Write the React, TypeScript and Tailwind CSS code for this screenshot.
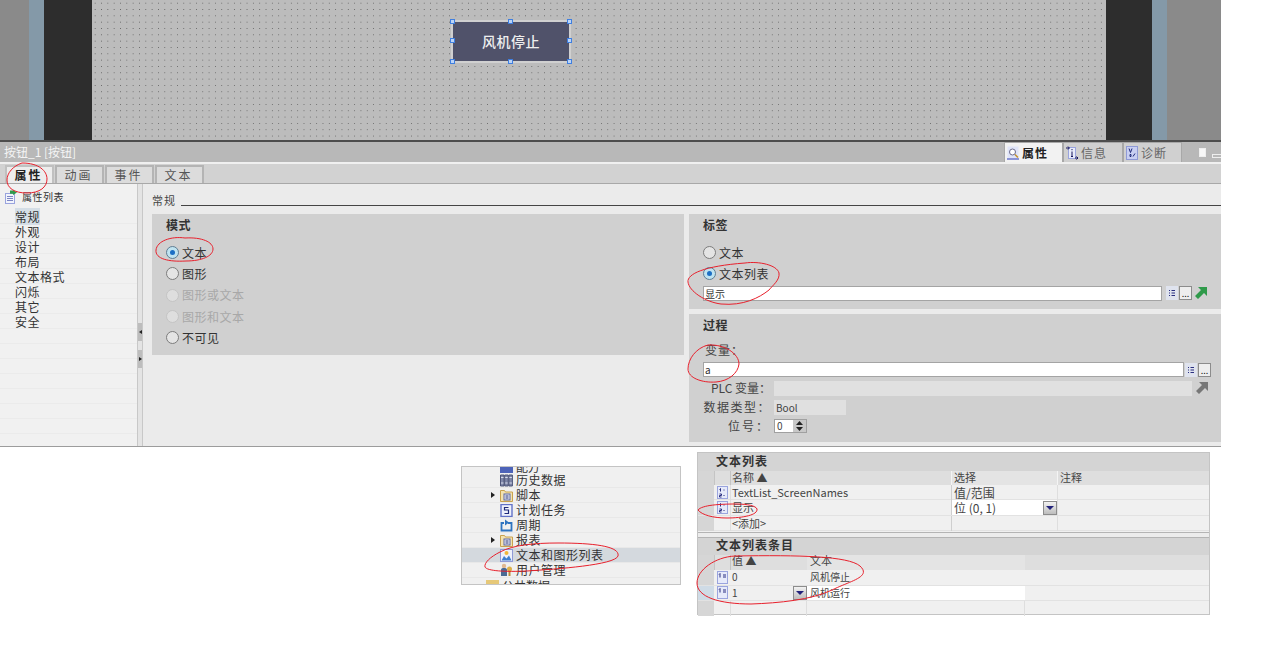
import React from 'react';

const font = "font-['Noto_Sans_CJK_SC','Liberation_Sans',sans-serif]";

const ListIcon = () => (
  <svg width="11" height="13" viewBox="0 0 11 13">
    <rect x="0.5" y="0.5" width="10" height="12" fill="#e6eafa" stroke="#9aa4de" />
    <path d="M3.5 2.5v3M2.5 3.5l1-1M2.5 8h2v1.5h-2v1.5h2M6.5 4h1M6.5 9.5h1" stroke="#2a2f80" fill="none" />
  </svg>
);

const EntryIcon = () => (
  <svg width="11" height="13" viewBox="0 0 11 13">
    <rect x="0.5" y="0.5" width="10" height="12" fill="#e6eafa" stroke="#9aa4de" />
    <path d="M3 2.5v4M2 3.5l1-1M6 4h3M6 6h3" stroke="#2a2f80" fill="none" />
  </svg>
);

const PropsListIcon = () => (
  <svg width="12" height="14" viewBox="0 0 12 14">
    <rect x="0.5" y="3.5" width="9" height="10" fill="#f2f4fc" stroke="#9aa4de" />
    <path d="M2 6.5h6M2 8.5h6M2 10.5h6" stroke="#7c86c4" />
    <path d="M5 0.5h3V0l4 2.5L8 5V3.8H5z" fill="#2f9a4a" />
  </svg>
);

const DropArrow = () => (
  <span className="flex h-[14px] w-[14px] items-center justify-center border border-[#8c8c8c] bg-[linear-gradient(#f2f2f2,#bdbdbd)]">
    <svg width="8" height="4" viewBox="0 0 8 4"><path d="M0 0h8L4 4z" fill="#22227a" /></svg>
  </span>
);

const Radio = ({ checked, disabled }: { checked?: boolean; disabled?: boolean }) => (
  <span
    className={`flex h-[13px] w-[13px] items-center justify-center rounded-full border ${
      disabled ? 'border-[#c4c4c4] bg-[#dedede]' : checked ? 'border-[#5f7d92] bg-[#bfe3f0]' : 'border-[#7c7c7c] bg-[#e4e4e4]'
    }`}
  >
    {checked && <span className="h-[5px] w-[5px] rounded-full bg-[#1c6fc4]" />}
  </span>
);

const RadioRow = ({ label, checked, disabled }: { label: string; checked?: boolean; disabled?: boolean }) => (
  <div className={`flex h-[21.3px] items-center gap-[3px] text-[12px] tracking-[0.5px] ${disabled ? 'text-[#a8a8a8]' : 'text-[#333]'}`}>
    <Radio checked={checked} disabled={disabled} />
    <span>{label}</span>
  </div>
);

const PickerButtons = () => (
  <div className="ml-[1px] flex items-center gap-[1px]">
    <span className="flex h-[14px] w-[12px] items-center justify-center bg-[#dfe3ee]">
      <svg width="8" height="8" viewBox="0 0 8 8"><path d="M1 1h1v1H1zM1 3.5h1v1H1zM1 6h1v1H1zM3.5 1H7v1H3.5zM3.5 3.5H7v1H3.5zM3.5 6H7v1H3.5z" fill="#2a2f80" /></svg>
    </span>
    <span className="flex h-[14px] w-[13px] items-end justify-center border border-[#8c8c8c] bg-[#eeeeee] text-[9px] leading-[10px] text-[#222]">...</span>
  </div>
);

const GoArrow = ({ color }: { color: string }) => (
  <svg width="12" height="12" viewBox="0 0 12 12" className="ml-[3px]">
    <path d="M3 0h9v9L9 6 3 12 0 9l6-6z" fill={color} />
  </svg>
);

const Handle = ({ className }: { className: string }) => (
  <span className={`absolute h-[5px] w-[5px] border border-[#3f7fe0] bg-[#bcd4f7] ${className}`} />
);

const TabButton = ({ label, active }: { label: string; active?: boolean }) => (
  <div
    className={`flex h-[18px] w-[49px] items-center justify-center border-2 border-b-0 border-[#b4b4b4] pr-[2px] text-[12px] tracking-[2px] ${
      active ? 'border-[#c0c0c0] bg-[#ededed] font-bold text-[#222]' : 'bg-[#dcdcdc] text-[#555]'
    }`}
  >
    {label}
  </div>
);

const PropsTabIcon = () => (
  <svg width="12" height="14" viewBox="0 0 12 14">
    <rect x="0.5" y="0.5" width="11" height="12" fill="#dfe4f8" />
    <path d="M0 13h12" stroke="#6a76cc" strokeWidth="1.5" />
    <circle cx="5.5" cy="6" r="3" fill="#fff" stroke="#6c6c8c" />
    <path d="M8 8.5l3 3" stroke="#c4902c" strokeWidth="1.5" />
  </svg>
);

const InfoTabIcon = () => (
  <svg width="12" height="14" viewBox="0 0 12 14">
    <rect x="2.5" y="1.5" width="7" height="11" fill="#e8ecfa" stroke="#9aa4de" />
    <path d="M0 2h3M2 .5L3.5 2 2 3.5M9 12h3M10.5 10.5L12 12l-1.5 1.5" stroke="#14145c" fill="none" />
    <path d="M6 5.5v4.5M5 10.5h2M6 3v1.2" stroke="#14145c" />
  </svg>
);

const DiagTabIcon = () => (
  <svg width="12" height="14" viewBox="0 0 12 14">
    <rect x="0.5" y="0.5" width="11" height="13" fill="#c8cff2" stroke="#8f9ad6" />
    <path d="M3 2.5l1.5 4 1.5-4M7 10.5l2-3M4 8.5h1v2H4z" stroke="#1f2a7a" fill="none" />
  </svg>
);

const InspectorTab = ({ label, active, icon, className }: { label: string; active?: boolean; icon: React.ReactNode; className: string }) => (
  <div
    className={`flex h-[20px] items-center gap-[3px] border border-b-0 border-[#a8a8a8] pl-[2px] text-[12px] tracking-[1px] ${className} ${
      active ? 'bg-[#f2f2f2] font-bold text-[#222]' : 'bg-[#d0d0d0] text-[#666]'
    }`}
  >
    {icon}
    <span>{label}</span>
  </div>
);

const FieldLabel = ({ children, className }: { children: React.ReactNode; className?: string }) => (
  <span className={`w-[70px] whitespace-nowrap text-right text-[12px] text-[#444] ${className ?? 'pr-[2px]'}`}>{children}</span>
);

const navItems = ['常规', '外观', '设计', '布局', '文本格式', '闪烁', '其它', '安全'];

const FolderIcon = () => (
  <svg width="13" height="13" viewBox="0 0 13 13">
    <path d="M.5 1.5h4l1 1.5h7v9.5H.5z" fill="#f3e2b0" stroke="#c9a24e" />
    <rect x="4" y="5" width="6" height="6" fill="#e6e9f6" stroke="#5c66a0" />
    <path d="M5.5 7h3M5.5 9h3" stroke="#333a78" />
  </svg>
);

const treeIcons: Record<string, React.ReactNode> = {
  历史数据: (
    <svg width="13" height="13" viewBox="0 0 13 13">
      <path d="M.5 1h3.5v11H.5zM4.7 1h3.5v11H4.7zM8.9 1h3.5v11H8.9z" fill="#7e86a8" stroke="#4c5478" />
      <path d="M1 3.5h2.5M5.2 3.5h2.5M9.4 3.5h2.5M1 9h2.5M5.2 9h2.5M9.4 9h2.5" stroke="#d8dcec" />
    </svg>
  ),
  脚本: <FolderIcon />,
  计划任务: (
    <svg width="13" height="13" viewBox="0 0 13 13">
      <rect x="1" y="0.5" width="11" height="12" fill="#eef1fb" stroke="#6272c8" strokeWidth="1.4" />
      <path d="M8.5 3.5h-4v2.5h4v3.5h-4" stroke="#1f2a7a" fill="none" strokeWidth="1.2" />
    </svg>
  ),
  周期: (
    <svg width="13" height="13" viewBox="0 0 13 13">
      <path d="M4 4H1.5v7.5h10V4H8" fill="none" stroke="#2f74c0" strokeWidth="1.8" />
      <path d="M5 .5L9 3.5 5 6.5z" fill="#2f74c0" />
    </svg>
  ),
  报表: <FolderIcon />,
  文本和图形列表: (
    <svg width="13" height="13" viewBox="0 0 13 13">
      <rect x="0.5" y="0.5" width="12" height="12" fill="#eef1fb" stroke="#8f9ad6" />
      <circle cx="6.5" cy="4" r="2" fill="#f0b83c" />
      <path d="M1.5 11.5L4 7l2.5 2.5L9 6.500l2.500 5z" fill="#3f7fd0" />
    </svg>
  ),
  用户管理: (
    <svg width="13" height="14" viewBox="0 0 13 14">
      <circle cx="4" cy="3" r="2.200" fill="#e0b890" />
      <path d="M1 13V7c0-1.500 1-2 3-2s3 .5 3 2v6z" fill="#4a6a94" />
      <circle cx="9.500" cy="6" r="2.500" fill="#dcb14a" />
      <path d="M9.500 8v5" stroke="#b98e3a" strokeWidth="2" />
    </svg>
  ),
};

const treeRows = [
  { label: '历史数据' },
  { label: '脚本', arrow: true },
  { label: '计划任务' },
  { label: '周期' },
  { label: '报表', arrow: true },
  { label: '文本和图形列表', active: true },
  { label: '用户管理' },
];

const ListRow = ({ name, select, selected }: { name?: string; select?: string; selected?: boolean }) => (
  <div className="grid h-[15.4px] grid-cols-[16px_17px_220px_106px_1fr] border-b border-[#e2e2e2] text-[11px] text-[#444]">
    <span className="bg-[#d6d6d6]" />
    <span className="flex items-center justify-center border-r border-[#dedede]">{name && <ListIcon />}</span>
    <span className="pl-[1px] leading-[15px]">{name ?? '<添加>'}</span>
    <span className={`flex items-center justify-between border-l border-[#cfcfcf] pl-[2px] leading-[15px] ${selected ? 'bg-white' : ''}`}>
      <span className="text-[12px]">{select}</span>
      {selected && <DropArrow />}
    </span>
    <span className="border-l border-[#dedede]" />
  </div>
);

export default function App() {
  return (
    <div className={`relative h-[645px] w-[1280px] overflow-hidden bg-white ${font}`}>
      <div className="w-[1221px]">
        {/* canvas */}
        <div className="flex h-[142px] border-b-2 border-[#4d4d4d]">
          <div className="w-[29px] bg-[#8a8a8a]" />
          <div className="w-[15px] bg-[#8499a8]" />
          <div className="w-[48px] bg-[#2d2d2d]" />
          <div className="w-[1014px] bg-[#bcbcbc] bg-[radial-gradient(#666_0.5px,transparent_0.7px)] bg-[length:6.33px_6.33px] pl-[359px] pt-[20px]">
            <div className="relative flex h-[43px] w-[120px] items-center justify-center border-2 border-[#d0d0d0] bg-[#50526a] text-[14px] font-medium tracking-[0.5px] text-[#eeeeee]">
              风机停止
              <Handle className="-left-[3px] -top-[3px]" />
              <Handle className="left-[55px] -top-[3px]" />
              <Handle className="-right-[3px] -top-[3px]" />
              <Handle className="-left-[3px] top-[16px]" />
              <Handle className="-right-[3px] top-[16px]" />
              <Handle className="-bottom-[3px] -left-[3px]" />
              <Handle className="-bottom-[3px] left-[55px]" />
              <Handle className="-bottom-[3px] -right-[3px]" />
            </div>
          </div>
          <div className="w-[46px] bg-[#2d2d2d]" />
          <div className="w-[15px] bg-[#8499a8]" />
          <div className="flex-1 bg-[#8a8a8a]" />
        </div>

        {/* inspector title bar */}
        <div className="flex h-[20px] items-end justify-between bg-[#b8b8b8] pl-[4px]">
          <span className="self-center text-[12px] text-[#f4f4f4]">按钮_1 [按钮]</span>
          <div className="flex items-end">
            <InspectorTab label="属性" icon={<PropsTabIcon />} active className="w-[59px]" />
            <InspectorTab label="信息" icon={<InfoTabIcon />} className="w-[60px]" />
            <InspectorTab label="诊断" icon={<DiagTabIcon />} className="w-[59px]" />
            <div className="mb-[5px] ml-[17px] h-[9px] w-[7px] border border-[#eeeeee] bg-[#f7f7f7]" />
            <div className="mb-[4px] ml-[6px] h-[4px] w-[9px] border border-r-0 border-[#eeeeee]" />
          </div>
        </div>
        <div className="h-[2px] bg-[#f0f0f0]" />

        {/* tabs */}
        <div className="flex h-[20px] items-end gap-[1px] border-b border-[#a8a8a8] bg-[#d2d2d2] pl-[5px]">
          <TabButton label="属性" active />
          <TabButton label="动画" />
          <TabButton label="事件" />
          <TabButton label="文本" />
        </div>

        {/* body */}
        <div className="flex h-[263px] border-b border-[#9c9c9c] bg-[#ebebeb]">
          <aside className="flex w-[137px] flex-col bg-[#f1f1f1]">
            <div className="flex h-[25px] items-center gap-[5px] pl-[5px] text-[10px] tracking-[0.5px] text-[#333]">
              <PropsListIcon />
              <span>属性列表</span>
            </div>
            {navItems.map((item, i) => (
              <div key={item} className="h-[15px] border-b border-[#ebebeb] pl-[15px] text-[12px] leading-[15px] tracking-[0.5px] text-[#333]">
                <span className={i === 0 ? 'bg-[#d5dee6]' : ''}>{item}</span>
              </div>
            ))}
            {Array.from({ length: 7 }).map((_, i) => (
              <div key={i} className="h-[15px] border-b border-[#ebebeb]" />
            ))}
          </aside>
          <div className="flex w-[6px] flex-col gap-[9px] border-x border-[#c8c8c8] bg-[#e4e4e4] pt-[139px]">
            <div className="flex h-[18px] items-center justify-center bg-[#bdbdbd]">
              <span className="border-y-[2.5px] border-r-[3px] border-y-transparent border-r-[#222]" />
            </div>
            <div className="flex h-[18px] items-center justify-center bg-[#bdbdbd]">
              <span className="border-y-[2.5px] border-l-[3px] border-y-transparent border-l-[#222]" />
            </div>
          </div>
          <div className="flex-1 pl-[9px] pt-[8px]">
            <div className="flex h-[17px] gap-[5px] text-[11px] leading-[16px] tracking-[1px] text-[#444]">
              <span>常规</span>
              <div className="mt-[13px] h-px flex-1 bg-[#444]" />
            </div>
            <div className="mt-[5px] flex gap-[5px]">
              <section className="h-[141px] w-[532px] bg-[#d0d0d0] pl-[14px] pt-[2px]">
                <h3 className="h-[26px] pl-[-1px] text-[12px] font-bold leading-[18px] tracking-[0.5px] text-[#333]">模式</h3>
                <RadioRow label="文本" checked />
                <RadioRow label="图形" />
                <RadioRow label="图形或文本" disabled />
                <RadioRow label="图形和文本" disabled />
                <RadioRow label="不可见" />
              </section>
              <div className="flex flex-1 flex-col gap-[5px]">
                <section className="h-[95px] bg-[#d0d0d0] pl-[14px] pt-[2px]">
                  <h3 className="h-[26px] text-[12px] font-bold leading-[18px] tracking-[0.5px] text-[#333]">标签</h3>
                  <RadioRow label="文本" />
                  <RadioRow label="文本列表" checked />
                  <div className="mt-[1px] flex items-center">
                    <div className="h-[15px] w-[459px] border border-[#a4a4a4] bg-white pl-[1px] text-[10px] leading-[13px] text-[#333]">显示</div>
                    <div className="ml-[3px] flex"><PickerButtons /></div>
                    <GoArrow color="#2f9a4a" />
                  </div>
                </section>
                <section className="h-[128px] bg-[#d0d0d0] pl-[14px] pt-[2px]">
                  <h3 className="h-[18px] text-[12px] font-bold leading-[18px] tracking-[0.5px] text-[#333]">过程</h3>
                  <div className="h-[28px] pl-[2px] pt-[9px] text-[12px] leading-[14px] tracking-[1px] text-[#444]">变量：</div>
                  <div className="flex h-[15px] items-center">
                    <div className="h-[15px] w-[481px] border border-[#a4a4a4] bg-white pl-[1px] text-[10px] leading-[13px] text-[#333]">a</div>
                    <PickerButtons />
                  </div>
                  <div className="mt-[2px] flex items-center gap-[1px]">
                    <FieldLabel>PLC 变量：</FieldLabel>
                    <div className="h-[15px] w-[418px] bg-[#e0e0e0]" />
                    <GoArrow color="#777777" />
                  </div>
                  <div className="mt-[1px] flex items-center gap-[1px]">
                    <FieldLabel className="pr-[2px] tracking-[1.5px]">数据类型：</FieldLabel>
                    <div className="h-[15px] w-[72px] bg-[#e0e0e0] pl-[2px] text-[10px] leading-[15px] text-[#444]">Bool</div>
                  </div>
                  <div className="mt-[1px] flex items-center gap-[1px]">
                    <FieldLabel className="pr-[3px] tracking-[2px]">位号：</FieldLabel>
                    <div className="flex h-[14px] w-[33px] border border-[#a0a0a0] bg-white">
                      <span className="flex-1 pl-[2px] text-[10px] leading-[12px] text-[#444]">0</span>
                      <span className="flex w-[13px] flex-col items-center justify-center gap-[2px] bg-[#c8c8c8]">
                        <svg width="7" height="4" viewBox="0 0 7 4"><path d="M0 4h7L3.5 0z" fill="#222" /></svg>
                        <svg width="7" height="4" viewBox="0 0 7 4"><path d="M0 0h7L3.5 4z" fill="#222" /></svg>
                      </span>
                    </div>
                  </div>
                </section>
              </div>
            </div>
          </div>
        </div>
      </div>

      {/* lower crops */}
      <div className="flex items-start gap-[16px] pl-[461px] pt-[5px]">
        <div className="mt-[14px] h-[119px] w-[220px] overflow-hidden border border-[#c4c4c4] bg-[#f0f0f0]">
          <div className="-mt-[7px] flex h-[13px] items-center gap-[3px] overflow-hidden pl-[38px] text-[12px] leading-[13px] text-[#333]">
            <span className="h-[12px] w-[13px] bg-[#4d63b8]" />
            <span>配方</span>
          </div>
          {treeRows.map((row) => (
            <div key={row.label} className={`relative flex h-[15px] items-center gap-[3px] border-b border-[#e8e8e8] pl-[38px] text-[12px] leading-[14px] tracking-[0.5px] text-[#333] ${row.active ? 'bg-[#d4d9de]' : ''}`}>
              {row.arrow && <span className="absolute left-[29px] border-y-[3.5px] border-l-[4px] border-y-transparent border-l-[#222]" />}
              {treeIcons[row.label]}
              <span>{row.label}</span>
            </div>
          ))}
          <div className="flex h-[15px] items-center gap-[3px] pl-[24px] text-[12px] text-[#333]">
            <span className="h-[11px] w-[13px] bg-[#e6c878]" />
            <span>公共数据</span>
          </div>
        </div>

        <div className="h-[163px] w-[513px] border border-[#c4c4c4] bg-[#f0f0f0]">
          <div className="h-[18px] bg-[#d4d4d4] pl-[18px] text-[12px] font-bold leading-[16px] tracking-[1px] text-[#333]">文本列表</div>
          <div className="grid h-[14px] grid-cols-[16px_17px_220px_106px_1fr] bg-[#dedede] text-[11px] leading-[12px] text-[#444]">
            <span className="bg-[#d6d6d6]" />
            <span className="border-x border-[#c4c4c4]" />
            <span className="pl-[1px]">名称 ▲</span>
            <span className="border-l border-[#f4f4f4] bg-[#e4e4e4] pl-[2px]">选择</span>
            <span className="border-l border-[#f4f4f4] pl-[2px]">注释</span>
          </div>
          <ListRow name="TextList_ScreenNames" select="值/范围" />
          <ListRow name="显示" select="位 (0, 1)" selected />
          <ListRow select="" />
          <div className="mt-[1px] h-[6px] border-y border-[#b4b4b4] bg-[#ececec]" />
          <div className="h-[17px] bg-[#d4d4d4] pl-[18px] text-[12px] font-bold leading-[13px] tracking-[1px] text-[#333]">文本列表条目</div>
          <div className="grid h-[15px] grid-cols-[16px_17px_76px_218px_1fr] bg-[#dedede] text-[11px] leading-[11px] text-[#444]">
            <span className="bg-[#d6d6d6]" />
            <span className="border-x border-[#c4c4c4]" />
            <span className="pl-[1px]">值 ▲</span>
            <span className="bg-[#e4e4e4] pl-[3px]">文本</span>
            <span />
          </div>
          {[
            { value: '0', text: '风机停止' },
            { value: '1', text: '风机运行', selected: true },
          ].map((row) => (
            <div key={row.value} className="grid h-[15.4px] grid-cols-[16px_17px_76px_218px_1fr] border-b border-[#e2e2e2] text-[10px] leading-[14px] text-[#444]">
              <span className={row.selected ? 'bg-[#cfdbe6]' : 'bg-[#d6d6d6]'} />
              <span className="flex items-center justify-center"><EntryIcon /></span>
              <span className="flex items-center justify-between pl-[1px]">
                {row.value}
                {row.selected && <DropArrow />}
              </span>
              <span className={`pl-[3px] ${row.selected ? 'bg-white' : ''}`}>{row.text}</span>
              <span />
            </div>
          ))}
          <div className="grid h-[15px] grid-cols-[16px_17px_76px_218px_1fr]">
            <span className="bg-[#d6d6d6]" />
            <span className="border-r border-[#dedede]" />
            <span className="border-r border-[#dedede]" />
            <span className="border-r border-[#dedede]" />
            <span />
          </div>
        </div>
      </div>

      {/* red pen annotations */}
      <svg className="pointer-events-none absolute left-0 top-0" width="1280" height="645" fill="none" stroke="#e8202c" strokeWidth="1">
        <path d="M22 163c-9 3-15 10-15 17 0 8 7 13 20 13 13 0 20-6 20-14s-8-16-25-16" />
        <path d="M185 238c-14-2-28 3-29 12-1 9 13 12 30 11 16 0 27-5 27-12s-11-12-28-11" />
        <path d="M745 263c14-2 32 2 34 10 1 7-6 12-10 17-10 8-26 16-48 14-16-2-32-13-33-22-1-8 16-16 57-19z" />
        <path d="M708 345c-12 3-20 14-20 24 0 9 14 14 28 13 13-1 22-9 23-18 0-10-14-20-31-19z" />
        <path d="M500 552c-10 5-16 11-15 15 2 4 20 5 42 4 30-2 88-6 91-15 2-9-20-13-60-13-24 0-45 2-58 9z" />
        <path d="M698 510c4-5 22-6 38-6 12 0 20 2 21 5 1 6-14 9-30 9-14 0-25-3-29-8z" />
        <path d="M735 556c-20 1-38 14-38 27 0 14 22 21 54 21 28-1 60-4 81-14 18-9 40-13 28-24-12-10-60-11-125-10z" />
      </svg>
    </div>
  );
}
